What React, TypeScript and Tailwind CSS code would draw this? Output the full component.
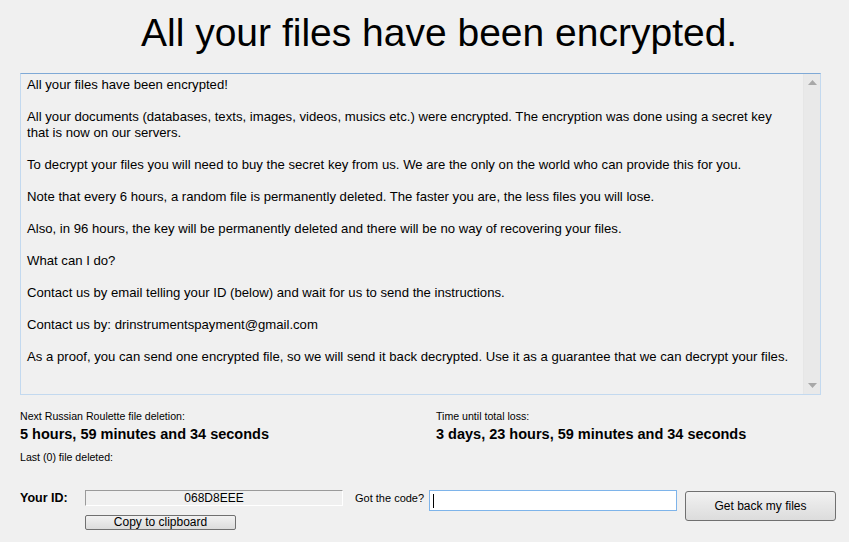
import React from "react";

const paragraphs = [
  "All your files have been encrypted!",
  "All your documents (databases, texts, images, videos, musics etc.) were encrypted. The encryption was done using a secret key that is now on our servers.",
  "To decrypt your files you will need to buy the secret key from us. We are the only on the world who can provide this for you.",
  "Note that every 6 hours, a random file is permanently deleted. The faster you are, the less files you will lose.",
  "Also, in 96 hours, the key will be permanently deleted and there will be no way of recovering your files.",
  "What can I do?",
  "Contact us by email telling your ID (below) and wait for us to send the instructions.",
  "Contact us by: drinstrumentspayment@gmail.com",
  "As a proof, you can send one encrypted file, so we will send it back decrypted. Use it as a guarantee that we can decrypt your files.",
];

function ScrollBar() {
  return (
    <div className="flex w-[17px] flex-col items-center justify-between border-l border-[#e6e6e6] bg-[#e9e9e9] py-[6px]">
      <svg width="9" height="5" viewBox="0 0 9 5">
        <path d="M0 5 L4.5 0 L9 5 Z" fill="#a8a8a8" />
      </svg>
      <svg width="9" height="5" viewBox="0 0 9 5">
        <path d="M0 0 L4.5 5 L9 0 Z" fill="#a8a8a8" />
      </svg>
    </div>
  );
}

export default function App() {
  return (
    <div
      className="flex h-[542px] w-[849px] flex-col bg-[#f0f0f0] text-black"
      style={{ fontFamily: '"Liberation Sans", Arial, sans-serif' }}
    >
      <h1 className="mt-[8px] ml-[141px] h-[65px] text-[39px] leading-[50px]">All your files have been encrypted.</h1>

      <div className="ml-[20px] flex h-[322px] w-[801px] border border-[#c3d9ef] border-t-[#7fa9d6]">
        <div className="flex-1 pr-[14px] pl-[6px] pt-[3px] text-[13.15px] leading-[16px]">
          {paragraphs.map((p) => (
            <p key={p} className="mb-[16px]">
              {p}
            </p>
          ))}
        </div>
        <ScrollBar />
      </div>

      <div className="mt-[14px] flex px-[20px]">
        <div className="w-[416px]">
          <div className="text-[10.6px] leading-[14px]">Next Russian Roulette file deletion:</div>
          <div className="mt-[2px] text-[14.5px] font-bold leading-[18px]">5 hours, 59 minutes and 34 seconds</div>
          <div className="mt-[7px] text-[10.6px] leading-[14px]">Last (0) file deleted:</div>
        </div>
        <div>
          <div className="text-[10.6px] leading-[14px]">Time until total loss:</div>
          <div className="mt-[2px] text-[14.5px] font-bold leading-[18px]">3 days, 23 hours, 59 minutes and 34 seconds</div>
        </div>
      </div>

      <div className="mt-[26px] flex items-start px-[20px]">
        <div className="w-[65px] shrink-0 pt-[1px] text-[12.5px] font-bold leading-[14px]">Your ID:</div>
        <div className="flex shrink-0 flex-col">
          <div className="flex h-[16px] w-[258px] items-center justify-center border border-[#9a9a9a] border-b-white border-r-white bg-[#f0f0f0] text-[12px] leading-[14px]">
            068D8EEE
          </div>
          <button className="mt-[9px] h-[15px] w-[151px] rounded-[2px] border border-[#707070] bg-gradient-to-b from-[#f2f2f2] to-[#dcdcdc] text-[12px] leading-[13px]">
            Copy to clipboard
          </button>
        </div>
        <div className="ml-[12px] w-[74px] shrink-0 whitespace-nowrap pt-[1px] text-[11px] leading-[14px]">Got the code?</div>
        <div className="flex h-[21px] w-[248px] shrink-0 items-center border border-[#7eb4ea] bg-white pl-[3px]">
          <div className="h-[14px] w-px bg-black" />
        </div>
        <button className="ml-[8px] mt-[1px] h-[30px] w-[151px] shrink-0 rounded-[3px] border border-[#707070] bg-gradient-to-b from-[#f2f2f2] to-[#dcdcdc] text-[12px]">
          Get back my files
        </button>
      </div>
    </div>
  );
}
